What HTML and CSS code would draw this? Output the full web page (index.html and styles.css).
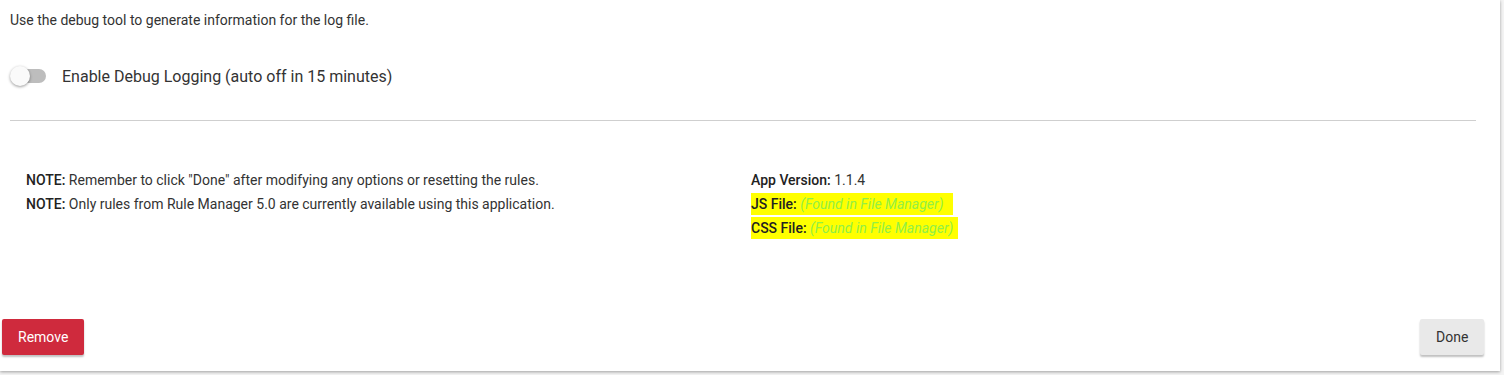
FILE: index.html
```html
<!DOCTYPE html>
<html lang="en">
<head>
<meta charset="utf-8">
<title>Debug</title>
<link rel="stylesheet" href="styles.css">
</head>
<body>
<div class="panel">
  <div class="top">
    <p class="intro">Use the debug tool to generate information for the log file.</p>
    <label class="switch-row">
      <span class="switch"><span class="track"></span><span class="thumb"></span></span>
      <span class="switch-label">Enable Debug Logging (auto off in 15 minutes)</span>
    </label>
    <div class="divider"></div>
  </div>
  <div class="info">
    <div class="notes">
      <div class="line"><b>NOTE:</b> Remember to click "Done" after modifying any options or resetting the rules.</div>
      <div class="line"><b>NOTE:</b> Only rules from Rule Manager 5.0 are currently available using this application.</div>
    </div>
    <div class="meta">
      <div class="line"><b>App Version:</b> 1.1.4</div>
      <div class="line"><span class="hl hl-js"><b>JS File:</b> <i class="missing">(Found in File Manager)</i></span></div>
      <div class="line"><span class="hl"><b>CSS File:</b> <i class="missing">(Found in File Manager)</i></span></div>
    </div>
  </div>
  <div class="actions">
    <button class="btn btn-remove">Remove</button>
    <button class="btn btn-done">Done</button>
  </div>
</div>
</body>
</html>
```
FILE: styles.css
```css
html, body {
  margin: 0;
  padding: 0;
  background: #f4f4f4;
}
body {
  font-family: Roboto, "Liberation Sans", sans-serif;
  color: #333;
  width: 1504px;
  height: 375px;
  overflow: hidden;
}
.panel {
  width: 1500px;
  height: 371px;
  background: #fff;
  box-shadow: 0 1px 3px rgba(0,0,0,0.35);
  display: flex;
  flex-direction: column;
}
.top {
  padding: 0 24px 0 10px;
}
.intro {
  margin: 0;
  padding-top: 11px;
  font-size: 14px;
  line-height: 18px;
  color: #333;
}
.switch-row {
  display: flex;
  align-items: center;
  gap: 16px;
  margin-top: 35px;
  height: 24px;
}
.switch {
  position: relative;
  width: 36px;
  height: 20px;
  display: block;
}
.track {
  position: absolute;
  left: 4px;
  top: 3px;
  width: 32px;
  height: 14px;
  border-radius: 7px;
  background: #bdbdbd;
}
.thumb {
  position: absolute;
  left: 0;
  top: 0;
  width: 20px;
  height: 20px;
  border-radius: 50%;
  background: #fafafa;
  box-shadow: 0 1px 3px rgba(0,0,0,0.4);
}
.switch-label {
  font-size: 16px;
  color: #333;
}
.divider {
  margin-top: 32px;
  height: 1px;
  background: #cfcfcf;
}
.info {
  display: grid;
  grid-template-columns: 725px 1fr;
  padding: 47px 0 0 26px;
  font-size: 14px;
  color: #333;
}
.line {
  line-height: 24px;
}
.line b {
  font-weight: 500;
  color: #222;
}
.hl {
  background: #ffff00;
  padding: 3px 5px 3px 0;
}
.hl-js {
  padding-right: 10px;
}
.missing {
  color: #92f046;
  font-style: italic;
}
.actions {
  margin-top: auto;
  display: flex;
  justify-content: space-between;
  padding: 0 16px 16px 2px;
}
.btn {
  font-family: Roboto, "Liberation Sans", sans-serif;
  font-size: 14px;
  height: 36px;
  border: none;
  border-radius: 2px;
  padding: 0 16px;
  box-shadow: 0 2px 2px rgba(0,0,0,0.25);
  cursor: pointer;
}
.btn-remove {
  background: #cf2a3d;
  color: #fff;
  width: 82px;
}
.btn-done {
  background: #e9e9e9;
  color: #333;
  width: 64px;
}
```
